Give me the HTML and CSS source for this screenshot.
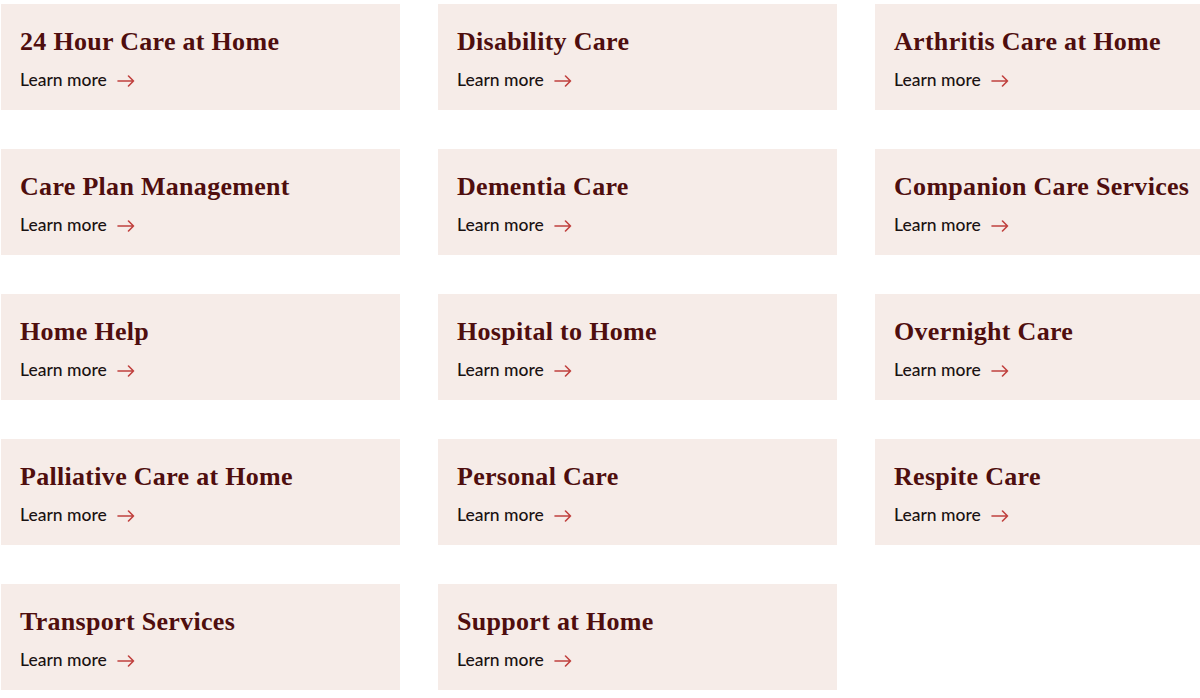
FILE: index.html
```html
<!DOCTYPE html>
<html lang="en">
<head>
<meta charset="utf-8">
<title>Services</title>
<link rel="stylesheet" href="styles.css">
</head>
<body>
<div class="grid">
  <a class="card" href="#"><h3 class="title">24 Hour Care at Home</h3><span class="more">Learn more <svg class="arrow" viewBox="0 0 18 12" width="18" height="12"><path d="M1 6H16.5M11.5 1L16.5 6L11.5 11"/></svg></span></a>
  <a class="card" href="#"><h3 class="title">Disability Care</h3><span class="more">Learn more <svg class="arrow" viewBox="0 0 18 12" width="18" height="12"><path d="M1 6H16.5M11.5 1L16.5 6L11.5 11"/></svg></span></a>
  <a class="card" href="#"><h3 class="title">Arthritis Care at Home</h3><span class="more">Learn more <svg class="arrow" viewBox="0 0 18 12" width="18" height="12"><path d="M1 6H16.5M11.5 1L16.5 6L11.5 11"/></svg></span></a>
  <a class="card" href="#"><h3 class="title">Care Plan Management</h3><span class="more">Learn more <svg class="arrow" viewBox="0 0 18 12" width="18" height="12"><path d="M1 6H16.5M11.5 1L16.5 6L11.5 11"/></svg></span></a>
  <a class="card" href="#"><h3 class="title">Dementia Care</h3><span class="more">Learn more <svg class="arrow" viewBox="0 0 18 12" width="18" height="12"><path d="M1 6H16.5M11.5 1L16.5 6L11.5 11"/></svg></span></a>
  <a class="card" href="#"><h3 class="title">Companion Care Services</h3><span class="more">Learn more <svg class="arrow" viewBox="0 0 18 12" width="18" height="12"><path d="M1 6H16.5M11.5 1L16.5 6L11.5 11"/></svg></span></a>
  <a class="card" href="#"><h3 class="title">Home Help</h3><span class="more">Learn more <svg class="arrow" viewBox="0 0 18 12" width="18" height="12"><path d="M1 6H16.5M11.5 1L16.5 6L11.5 11"/></svg></span></a>
  <a class="card" href="#"><h3 class="title">Hospital to Home</h3><span class="more">Learn more <svg class="arrow" viewBox="0 0 18 12" width="18" height="12"><path d="M1 6H16.5M11.5 1L16.5 6L11.5 11"/></svg></span></a>
  <a class="card" href="#"><h3 class="title">Overnight Care</h3><span class="more">Learn more <svg class="arrow" viewBox="0 0 18 12" width="18" height="12"><path d="M1 6H16.5M11.5 1L16.5 6L11.5 11"/></svg></span></a>
  <a class="card" href="#"><h3 class="title">Palliative Care at Home</h3><span class="more">Learn more <svg class="arrow" viewBox="0 0 18 12" width="18" height="12"><path d="M1 6H16.5M11.5 1L16.5 6L11.5 11"/></svg></span></a>
  <a class="card" href="#"><h3 class="title">Personal Care</h3><span class="more">Learn more <svg class="arrow" viewBox="0 0 18 12" width="18" height="12"><path d="M1 6H16.5M11.5 1L16.5 6L11.5 11"/></svg></span></a>
  <a class="card" href="#"><h3 class="title">Respite Care</h3><span class="more">Learn more <svg class="arrow" viewBox="0 0 18 12" width="18" height="12"><path d="M1 6H16.5M11.5 1L16.5 6L11.5 11"/></svg></span></a>
  <a class="card" href="#"><h3 class="title">Transport Services</h3><span class="more">Learn more <svg class="arrow" viewBox="0 0 18 12" width="18" height="12"><path d="M1 6H16.5M11.5 1L16.5 6L11.5 11"/></svg></span></a>
  <a class="card" href="#"><h3 class="title">Support at Home</h3><span class="more">Learn more <svg class="arrow" viewBox="0 0 18 12" width="18" height="12"><path d="M1 6H16.5M11.5 1L16.5 6L11.5 11"/></svg></span></a>
</div>
</body>
</html>
```
FILE: styles.css
```css
html, body {
  margin: 0;
  padding: 0;
  background: #ffffff;
  overflow: hidden;
}
.grid {
  display: grid;
  grid-template-columns: repeat(3, 399px);
  column-gap: 38px;
  row-gap: 39px;
  padding: 4px 0 0 1px;
  width: max-content;
}
.card {
  display: flex;
  flex-direction: column;
  height: 106px;
  box-sizing: border-box;
  padding: 23px 19px 0 19px;
  background: #f6ece8;
  text-decoration: none;
}
.title {
  margin: 0;
  font-family: "Liberation Serif", "Times New Roman", serif;
  font-weight: 700;
  font-size: 26px;
  line-height: 30px;
  letter-spacing: 0.3px;
  color: #4f0e0e;
  white-space: nowrap;
}
.more {
  display: flex;
  align-items: center;
  gap: 10px;
  margin-top: 11px;
  font-family: "Lato", "Liberation Sans", sans-serif;
  font-weight: 500;
  font-size: 17.5px;
  line-height: 24px;
  color: #1a1212;
}
.arrow {
  fill: none;
  stroke: #c0403e;
  stroke-width: 1.6;
  stroke-linecap: round;
  stroke-linejoin: round;
  margin-top: 1px;
}
```
